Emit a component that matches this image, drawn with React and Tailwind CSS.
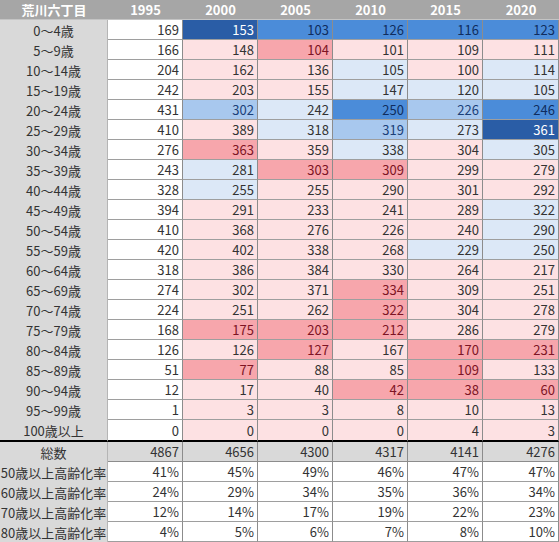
const years = ["1995", "2000", "2005", "2010", "2015", "2020"];

// W white, a pale blue, b light blue, c mid blue, d dark blue, p pale pink, q pink
const rows = [
  ["0～4歳", [169, 153, 103, 126, 116, 123], "Wdcccc"],
  ["5～9歳", [166, 148, 104, 101, 109, 111], "Wpqppp"],
  ["10～14歳", [204, 162, 136, 105, 100, 114], "Wppapa"],
  ["15～19歳", [242, 203, 155, 147, 120, 105], "Wppaaa"],
  ["20～24歳", [431, 302, 242, 250, 226, 246], "Wbacbc"],
  ["25～29歳", [410, 389, 318, 319, 273, 361], "Wpabad"],
  ["30～34歳", [276, 363, 359, 338, 304, 305], "Wqpapa"],
  ["35～39歳", [243, 281, 303, 309, 299, 279], "Waqqpp"],
  ["40～44歳", [328, 255, 255, 290, 301, 292], "Wapppp"],
  ["45～49歳", [394, 291, 233, 241, 289, 322], "Wppppa"],
  ["50～54歳", [410, 368, 276, 226, 240, 290], "Wppppa"],
  ["55～59歳", [420, 402, 338, 268, 229, 250], "Wpppaa"],
  ["60～64歳", [318, 386, 384, 330, 264, 217], "Wppppp"],
  ["65～69歳", [274, 302, 371, 334, 309, 251], "Wppqpp"],
  ["70～74歳", [224, 251, 262, 322, 304, 278], "Wppqpp"],
  ["75～79歳", [168, 175, 203, 212, 286, 279], "Wqqqpp"],
  ["80～84歳", [126, 126, 127, 167, 170, 231], "Wpqpqq"],
  ["85～89歳", [51, 77, 88, 85, 109, 133], "Wqppqp"],
  ["90～94歳", [12, 17, 40, 42, 38, 60], "Wppqqq"],
  ["95～99歳", [1, 3, 3, 8, 10, 13], "Wppppp"],
  ["100歳以上", [0, 0, 0, 0, 4, 3], "Wppppp"],
];

const totals = [4867, 4656, 4300, 4317, 4141, 4276];

const rates = [
  ["50歳以上高齢化率", ["41%", "45%", "49%", "46%", "47%", "47%"]],
  ["60歳以上高齢化率", ["24%", "29%", "34%", "35%", "36%", "34%"]],
  ["70歳以上高齢化率", ["12%", "14%", "17%", "19%", "22%", "23%"]],
  ["80歳以上高齢化率", ["4%", "5%", "6%", "7%", "8%", "10%"]],
];

const shade = {
  W: "bg-white text-[#333]",
  a: "bg-[#dce8f7] text-[#333]",
  b: "bg-[#a8c8ee] text-[#1b3f78]",
  c: "bg-[#4b8cd9] text-[#0f2c5e]",
  d: "bg-[#2a5da6] text-white",
  p: "bg-[#fde1e3] text-[#333]",
  q: "bg-[#f7a6ac] text-[#7d1424]",
};

const Label = ({ children, last }) => (
  <div
    className={`flex items-center justify-center bg-[#d9d9d9] text-[#333] border-r border-[#b5b5b5] ${
      last ? "h-[22px] border-b-2 border-b-black" : "h-[20px]"
    }`}
  >
    {children}
  </div>
);

const Cell = ({ value, cls, last }) => (
  <div
    className={`flex items-center justify-end pr-[3px] border-r border-[#8c8c8c] ${cls} ${
      last ? "h-[22px] border-b-2 border-b-black" : "h-[20px] border-b border-b-[#9e9e9e]"
    }`}
  >
    {value}
  </div>
);

export default function App() {
  return (
    <div className="w-[559px] h-[542px] bg-white font-['Noto_Sans_CJK_JP','Noto_Sans',sans-serif] text-[13px] leading-none">
      <div className="grid grid-cols-[108px_repeat(5,75px)_76px]">
        <div className="h-[20px] flex items-center justify-center bg-[#a6a6a6] text-white font-bold border-b border-[#c4c4c4]">
          荒川六丁目
        </div>
        {years.map((y) => (
          <div
            key={y}
            className="h-[20px] flex items-center justify-center bg-[#a6a6a6] text-white font-bold border-b border-[#c4c4c4]"
          >
            {y}
          </div>
        ))}

        {rows.map(([label, vals, codes], i) => {
          const last = i === rows.length - 1;
          return [
            <Label key={label} last={last}>
              {label}
            </Label>,
            ...vals.map((v, j) => (
              <Cell key={label + j} value={v} cls={shade[codes[j]]} last={last} />
            )),
          ];
        })}

        <Label>総数</Label>
        {totals.map((t, j) => (
          <div
            key={"t" + j}
            className="h-[20px] flex items-center justify-end pr-[3px] bg-[#d9d9d9] text-[#333] border-r border-b border-[#8c8c8c]"
          >
            {t}
          </div>
        ))}

        {rates.map(([label, vals]) => [
          <Label key={label}>{label}</Label>,
          ...vals.map((v, j) => (
            <Cell key={label + j} value={v} cls="bg-white text-[#333]" />
          )),
        ])}
      </div>
    </div>
  );
}
